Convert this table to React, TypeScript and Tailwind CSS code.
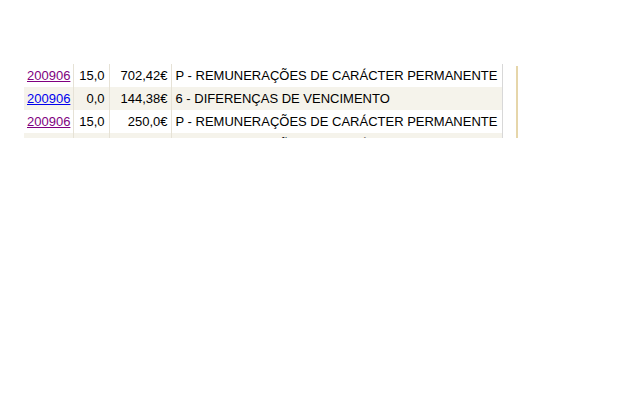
const rows = [
  { ref: '200906', visited: true, qty: '15,0', value: '702,42€', desc: 'P - REMUNERAÇÕES DE CARÁCTER PERMANENTE' },
  { ref: '200906', visited: false, qty: '0,0', value: '144,38€', desc: '6 - DIFERENÇAS DE VENCIMENTO' },
  { ref: '200906', visited: true, qty: '15,0', value: '250,0€', desc: 'P - REMUNERAÇÕES DE CARÁCTER PERMANENTE' },
  { ref: '200906', visited: true, qty: '15,0', value: '702,42€', desc: 'P - REMUNERAÇÕES DE CARÁCTER PERMANENTE' },
];

export default function App() {
  return (
    <div className="w-[640px] h-[400px] bg-white" style={{ fontFamily: '"Liberation Sans", Arial, sans-serif' }}>
      <div className="flex pt-[64px] pl-[24px]">
        <div className="h-[74px] w-[479px] overflow-hidden border-r border-[#d8d8d8]">
          <table className="w-[478px] table-fixed border-collapse text-[13px] text-black">
            <colgroup>
              <col className="w-[49px]" />
              <col className="w-[36px]" />
              <col className="w-[62px]" />
              <col className="w-[331px]" />
            </colgroup>
            <tbody>
              {rows.map((r, i) => (
                <tr key={i} className={`h-[23px] ${i % 2 === 1 ? 'bg-[#f5f3eb]' : 'bg-white'}`}>
                  <td className="pl-[3px] py-0 leading-[23px]">
                    <a href="#" className={`underline ${r.visited ? 'text-[#800080]' : 'text-[#0000ee]'}`}>
                      {r.ref}
                    </a>
                  </td>
                  <td className="border-l border-[#e6e2d6] pr-[4px] text-right leading-[23px]">{r.qty}</td>
                  <td className="border-l border-[#e6e2d6] pr-[3px] text-right leading-[23px]">{r.value}</td>
                  <td className="border-l border-[#e6e2d6] pl-[4px] leading-[23px] whitespace-nowrap">{r.desc}</td>
                </tr>
              ))}
            </tbody>
          </table>
        </div>
        <div className="ml-[13px] mt-[2px] h-[72px] w-[2px] bg-[#e6d6aa]" />
      </div>
    </div>
  );
}
